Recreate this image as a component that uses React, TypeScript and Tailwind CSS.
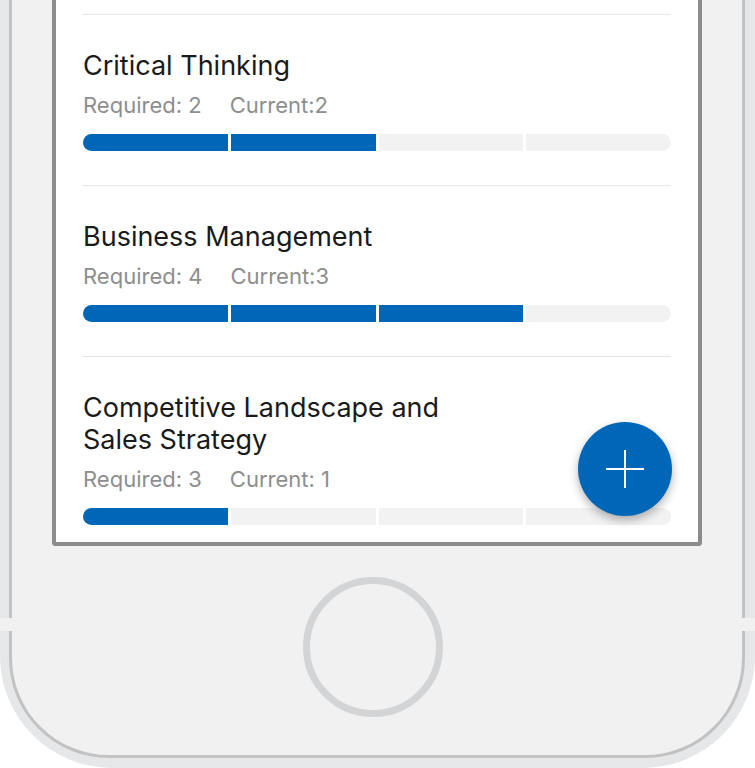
import React from 'react'

type Skill = {
  title: string
  required: number
  current: number
  label: string
}

const skills: Skill[] = [
  { title: 'Critical Thinking', required: 2, current: 2, label: 'Current:2' },
  { title: 'Business Management', required: 4, current: 3, label: 'Current:3' },
  { title: 'Competitive Landscape and Sales Strategy', required: 3, current: 1, label: 'Current: 1' },
]

const font = { fontFamily: 'Inter, "Noto Sans", sans-serif' }

const ProgressBar = ({ value }: { value: number }) => (
  <div className="flex gap-[3px] h-[17px] rounded-full overflow-hidden mt-[17px]">
    {[1, 2, 3, 4].map((i) => (
      <div key={i} className={`flex-1 ${i <= value ? 'bg-[#0067b8]' : 'bg-[#f2f2f2]'}`} />
    ))}
  </div>
)

const SkillRow = ({ skill, last }: { skill: Skill; last: boolean }) => (
  <div className={`border-t border-[#e6e6e6] pt-[35px] ${last ? '' : 'pb-[34px]'}`}>
    <h3 className="text-[27px] leading-[32px] text-[#1a1a1a] max-w-[400px]">{skill.title}</h3>
    <div className="flex gap-[28px] mt-[11px] text-[22px] leading-[24px] text-[#8e8e8e]">
      <span>Required: {skill.required}</span>
      <span>{skill.label}</span>
    </div>
    <ProgressBar value={skill.current} />
  </div>
)

export default function App() {
  return (
    <div className="relative w-[755px] h-[768px] overflow-hidden bg-white flex flex-col justify-end" style={font}>
      {/* phone shell */}
      <div className="bg-[#e6e7e9] pl-[9px] pr-[10px] pb-[10px] rounded-b-[112px]">
        <div className="bg-[#f1f1f1] border-x-[3px] border-b-[3px] border-[#c2c2c2] rounded-b-[100px] px-[40px]">
          {/* screen */}
          <div className="relative bg-white border-x-4 border-b-4 border-[#8c8c8c] rounded-b-[4px] px-[27px] pt-[40px] pb-[17px]">
            {skills.map((s, i) => (
              <SkillRow key={s.title} skill={s} last={i === skills.length - 1} />
            ))}
            <button className="absolute right-[26px] bottom-[26px] w-[94px] h-[94px] rounded-full bg-[#0067b8] flex items-center justify-center shadow-[0_4px_10px_rgba(0,0,0,0.3)]">
              <svg width="38" height="38" viewBox="0 0 38 38">
                <path d="M19 0v38M0 19h38" stroke="white" strokeWidth="2" />
              </svg>
            </button>
          </div>
          {/* home button */}
          <div className="flex justify-center pt-[31px] pb-[38px] pr-[8px]">
            <div className="w-[140px] h-[140px] rounded-full border-[7px] border-[#d3d4d6]" />
          </div>
        </div>
      </div>
      {/* side notches */}
      <div className="absolute left-0 top-[618px] w-[12px] h-[13px] bg-[#f1f1f1]" />
      <div className="absolute right-0 top-[618px] w-[13px] h-[13px] bg-[#f1f1f1]" />
    </div>
  )
}
